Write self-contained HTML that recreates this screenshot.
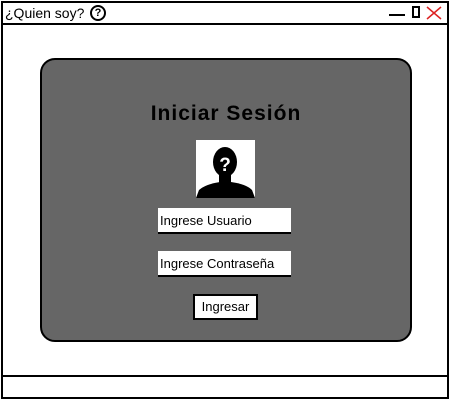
<!DOCTYPE html>
<html><head><style>
body{margin:0;width:450px;height:400px;background:#fff;position:relative;font-family:"Liberation Sans",sans-serif;overflow:hidden}
.a{position:absolute;box-sizing:border-box}
</style></head><body>
<div class="a" style="left:1px;top:1px;width:448px;height:398px;border:2px solid #000"></div>
<div class="a" style="left:1px;top:23px;width:448px;height:2px;background:#000"></div>
<div class="a" style="left:5px;top:5px;font-size:14px;color:#000">¿Quien soy?</div>
<div class="a" style="left:90px;top:5px;width:16px;height:16px;border:2px solid #000;border-radius:50%;font-size:11px;font-weight:bold;text-align:center;line-height:12px">?</div>
<div class="a" style="left:389px;top:14px;width:16px;height:2px;background:#000"></div>
<div class="a" style="left:412px;top:6px;width:8px;height:12px;border:2px solid #000;background:#000;box-shadow:inset 0 0 0 2px #fff"></div>
<svg class="a" style="left:426px;top:6px" width="16" height="14"><path d="M1 1L15 13M15 1L1 13" stroke="#d22" stroke-width="1.5"/></svg>
<div class="a" style="left:40px;top:58px;width:372px;height:284px;background:#666;border:2px solid #000;border-radius:15px"></div>
<div class="a" style="left:40px;top:102px;width:372px;text-align:center;font-size:21px;font-weight:bold;letter-spacing:1px">Iniciar Sesión</div>
<div class="a" style="left:196px;top:140px;width:59px;height:58px;background:#fff;overflow:hidden">
<svg width="59" height="58"><ellipse cx="29" cy="22" rx="12" ry="15" fill="#000"/><rect x="23" y="30" width="12" height="14" fill="#000"/><path d="M0 58L3 50Q10 44 24 42L35 42Q50 44 56 50L59 58Z" fill="#000"/><text x="29" y="31" font-size="19" font-weight="bold" fill="#fff" text-anchor="middle" font-family="Liberation Sans">?</text></svg></div>
<div class="a" style="left:158px;top:208px;width:133px;height:26px;background:#fff;border-bottom:2px solid #000;font-size:13px;padding:5px 0 0 2px">Ingrese Usuario</div>
<div class="a" style="left:158px;top:251px;width:133px;height:26px;background:#fff;border-bottom:2px solid #000;font-size:13px;padding:5px 0 0 2px">Ingrese Contraseña</div>
<div class="a" style="left:193px;top:294px;width:65px;height:26px;background:#fff;border:2px solid #000;font-size:13px;text-align:center;line-height:22px">Ingresar</div>
<div class="a" style="left:1px;top:375px;width:448px;height:2px;background:#000"></div>
</body></html>
